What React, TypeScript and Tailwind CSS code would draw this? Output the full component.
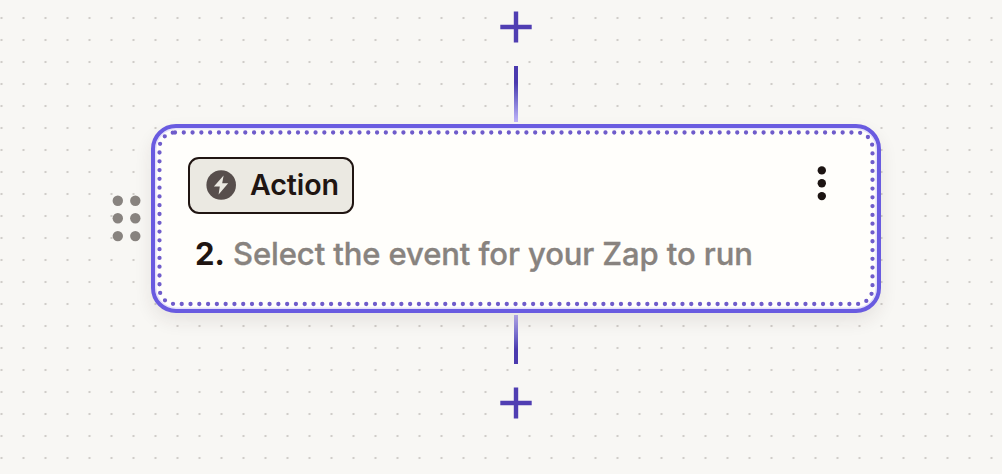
function AddStepButton() {
  return (
    <button type="button" aria-label="Add step" className="flex h-[54px] w-[54px] items-center justify-center bg-[#f8f7f4]">
      <svg width="32" height="32" viewBox="0 0 32 32" fill="none" stroke="#503eb2" strokeWidth="4.4">
        <path d="M16 0.4V31.6M0.3 16H31.7" />
      </svg>
    </button>
  );
}

function DragHandle() {
  return (
    <svg width="30" height="48" viewBox="0 0 30 48" fill="#88837f">
      {[5.7, 23.3, 41.1].map((y) => (
        <g key={y}>
          <circle cx="5.8" cy={y} r="5.2" />
          <circle cx="23.3" cy={y} r="5.2" />
        </g>
      ))}
    </svg>
  );
}

function ActionChip() {
  return (
    <div className="mt-px flex h-[57px] w-[166px] items-center rounded-[11px] border-2 border-[#201512] bg-[#ebe9e2] pb-px pl-4">
      <svg width="30" height="30" viewBox="0 0 30 30" className="shrink-0">
        <circle cx="15.2" cy="15" r="14.8" fill="#574e4c" />
        <path d="M17.6 5.6 7.9 16.6h5.9L12.6 24.4 22.2 13.2h-6z" fill="#ebe9e2" />
      </svg>
      <span className="ml-[14px] text-[28.6px] leading-8 font-semibold tracking-[-0.1px] text-[#201512]">Action</span>
    </div>
  );
}

function StepCard() {
  return (
    <div className="relative h-[189px] w-[730px] rounded-[25px] border-[4.5px] border-[#695be0] bg-[#fffefb] shadow-[inset_0_0_0_1.5px_#e4e0fb,0_8px_18px_rgba(60,30,30,0.09)]">
      <svg
        width="730"
        height="189"
        viewBox="0 0 730 189"
        fill="none"
        className="pointer-events-none absolute -top-1 -left-1"
      >
        <rect
          x="8.5"
          y="8.5"
          width="713"
          height="171.5"
          rx="15.5"
          stroke="#6f5ccb"
          strokeWidth="4.3"
          strokeLinecap="round"
          strokeDasharray="0 8.785"
        />
      </svg>
      <div className="flex items-start justify-between pt-7 pr-[50px] pl-[33px]">
        <ActionChip />
        <button type="button" aria-label="More options" className="mt-[9px]">
          <svg width="10" height="36" viewBox="0 0 10 36" fill="#1c1412">
            <circle cx="4.8" cy="5.4" r="4.2" />
            <circle cx="4.8" cy="18.2" r="4.2" />
            <circle cx="4.8" cy="31.1" r="4.2" />
          </svg>
        </button>
      </div>
      <p className="mt-5 flex pl-10 text-[31px] leading-10 whitespace-nowrap">
        <span className="w-[38px] font-bold text-[#201512]">2.</span>
        <span className="font-medium tracking-[-0.1px] text-[#88837f] [-webkit-text-stroke:0.35px_#88837f]">
          Select the event for your Zap to run
        </span>
      </p>
    </div>
  );
}

export default function App() {
  return (
    <main className="h-[474px] w-[1002px] overflow-hidden bg-[#f8f7f4] bg-[radial-gradient(circle_at_11px_11px,#d0cdc9_1px,transparent_1.6px)] bg-[length:22px_22px] bg-[position:-9.5px_7px] font-['Inter','Liberation_Sans',sans-serif]">
      <div className="flex flex-col items-center pl-[30px]">
        <AddStepButton />
        <div className="mt-3 h-14 w-1 bg-linear-to-b from-[#4b3aae] from-30% to-[#c1b5fa]" />
      </div>
      <div className="mt-0.5 flex items-center pl-28">
        <DragHandle />
        <div className="ml-[9px]">
          <StepCard />
        </div>
      </div>
      <div className="flex flex-col items-center pt-0.5 pl-[30px]">
        <div className="mb-3 h-[49px] w-1 bg-linear-to-b from-[#b8abf0] to-[#4b3aae] to-70%" />
        <AddStepButton />
      </div>
    </main>
  );
}
